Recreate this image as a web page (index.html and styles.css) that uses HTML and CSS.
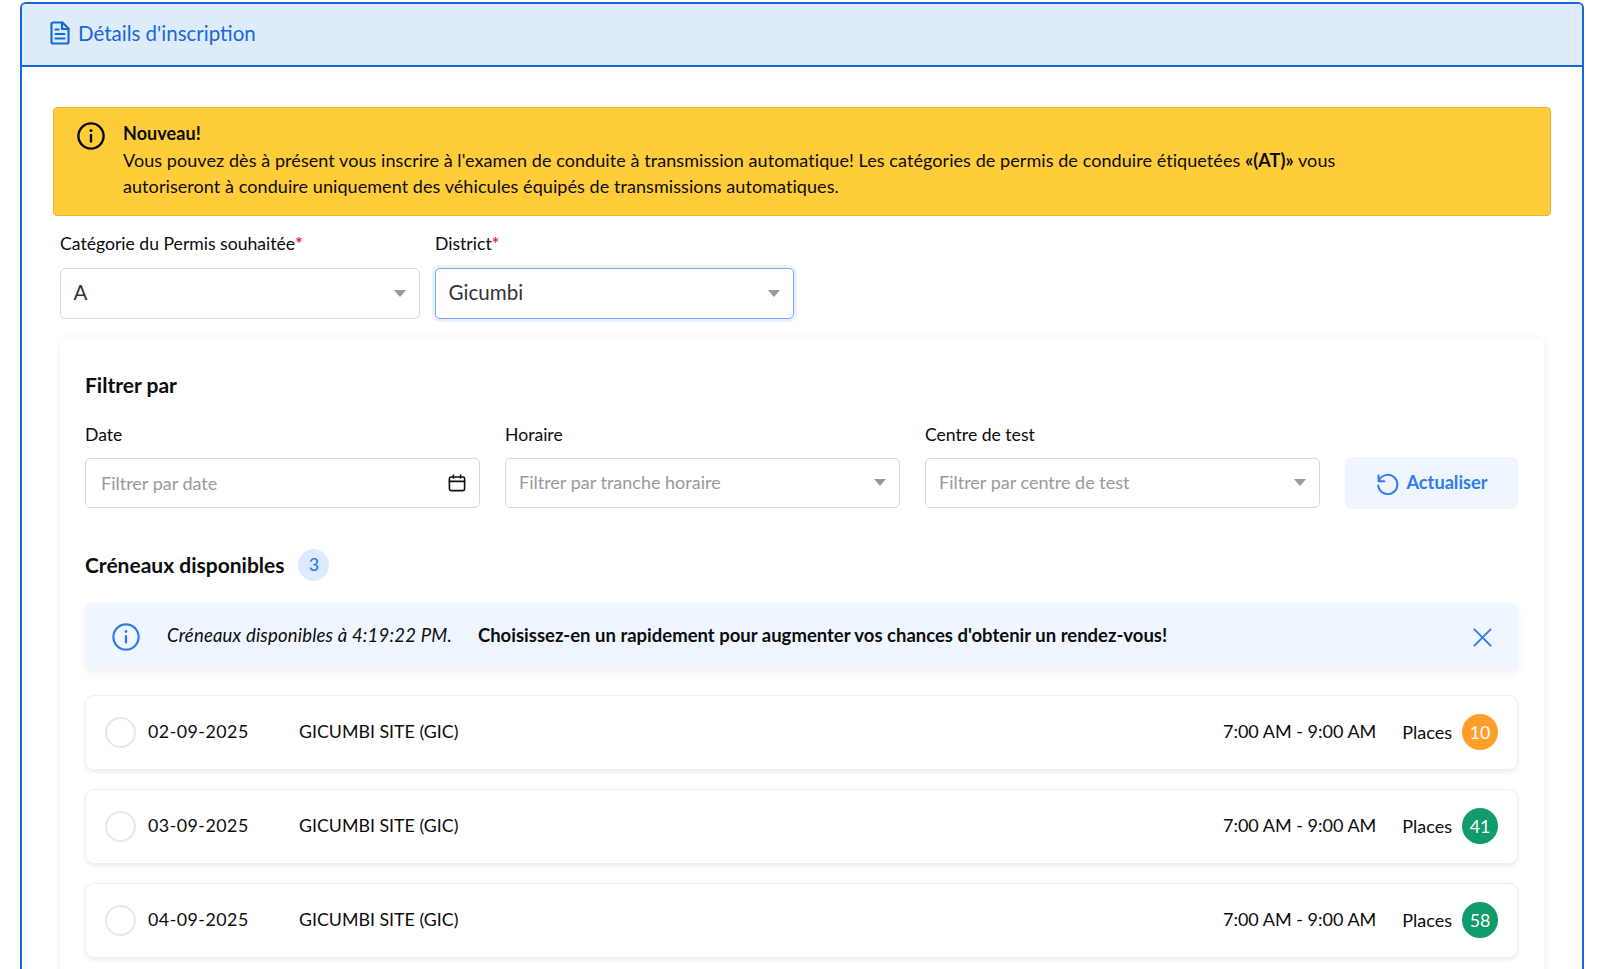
FILE: index.html
```html
<!DOCTYPE html>
<html lang="fr">
<head>
<meta charset="utf-8">
<title>Détails d'inscription</title>
<link rel="stylesheet" href="styles.css">
</head>
<body>
<section class="panel">
  <header class="panel-head">
    <svg class="doc-icon" viewBox="0 0 20 24" fill="none" stroke="currentColor" stroke-width="2.2" stroke-linejoin="round" stroke-linecap="round"><path d="M3 1.500h9.500l6 6V21a1.500 1.500 0 0 1-1.500 1.500H3A1.500 1.500 0 0 1 1.500 21V3A1.500 1.500 0 0 1 3 1.500z"/><path d="M12 1.500V8h6.500"/><path d="M5.500 8.500h3M5.500 13h9M5.500 17.500h9"/></svg>
    <h1 class="panel-title">Détails d'inscription</h1>
  </header>
  <div class="panel-body">
    <div class="notice">
      <svg class="notice-icon" viewBox="0 0 28 28" fill="none" stroke="currentColor" stroke-width="2.4" stroke-linecap="round"><circle cx="14" cy="14" r="12.600"/><path d="M14 13v6.500"/><path d="M14 8.400v.2" stroke-width="3"/></svg>
      <div class="notice-text">
        <strong>Nouveau!</strong><br>
        Vous pouvez dès à présent vous inscrire à l'examen de conduite à transmission automatique! Les catégories de permis de conduire étiquetées <strong>«(AT)»</strong> vous<br>
        autoriseront à conduire uniquement des véhicules équipés de transmissions automatiques.
      </div>
    </div>

    <div class="top-fields">
      <div class="field">
        <label class="label">Catégorie du Permis souhaitée<span class="req">*</span></label>
        <div class="select big"><span>A</span><i class="caret"></i></div>
      </div>
      <div class="field">
        <label class="label">District<span class="req">*</span></label>
        <div class="select big focus"><span>Gicumbi</span><i class="caret"></i></div>
      </div>
    </div>

    <div class="card">
      <h2 class="card-title">Filtrer par</h2>
      <div class="filters">
        <div class="field">
          <label class="label">Date</label>
          <div class="select date"><span class="ph">Filtrer par date</span>
            <svg class="cal" viewBox="0 0 18 18" fill="none" stroke="currentColor" stroke-width="1.600" stroke-linecap="round"><rect x="1.400" y="3" width="15.200" height="13.600" rx="1.600"/><path d="M1.400 7.400h15.200M5.400 1v3M12.600 1v3"/></svg>
          </div>
        </div>
        <div class="field">
          <label class="label">Horaire</label>
          <div class="select"><span class="ph">Filtrer par tranche horaire</span><i class="caret"></i></div>
        </div>
        <div class="field">
          <label class="label">Centre de test</label>
          <div class="select"><span class="ph">Filtrer par centre de test</span><i class="caret"></i></div>
        </div>
        <button class="refresh" type="button">
          <svg class="refresh-icon" viewBox="0 0 24 24" fill="none" stroke="currentColor" stroke-width="2" stroke-linecap="round" stroke-linejoin="round"><path d="M3.600 4.600v5.600h5.600"/><path d="M3.800 10a9.600 9.600 0 1 1-.6 4.400"/></svg>
          Actualiser
        </button>
      </div>

      <div class="slots-head">
        <h2 class="slots-title">Créneaux disponibles</h2>
        <span class="count">3</span>
      </div>

      <div class="banner">
        <svg class="banner-icon" viewBox="0 0 28 28" fill="none" stroke="currentColor" stroke-width="2.200" stroke-linecap="round"><circle cx="14" cy="14" r="12.600"/><path d="M14 13v6.500"/><path d="M14 8.400v.2" stroke-width="2.600"/></svg>
        <em class="banner-time">Créneaux disponibles à 4:19:22 PM.</em>
        <strong class="banner-msg">Choisissez-en un rapidement pour augmenter vos chances d'obtenir un rendez-vous!</strong>
        <svg class="banner-close" viewBox="0 0 20 20" fill="none" stroke="currentColor" stroke-width="2" stroke-linecap="round"><path d="M1.500 1.500l17 17M18.500 1.500l-17 17"/></svg>
      </div>

      <ul class="slots">
        <li class="slot"><span class="radio"></span><span class="slot-date">02-09-2025</span><span class="slot-site">GICUMBI SITE (GIC)</span><span class="slot-time">7:00 AM - 9:00 AM</span><span class="slot-label">Places</span><span class="seats low">10</span></li>
        <li class="slot"><span class="radio"></span><span class="slot-date">03-09-2025</span><span class="slot-site">GICUMBI SITE (GIC)</span><span class="slot-time">7:00 AM - 9:00 AM</span><span class="slot-label">Places</span><span class="seats">41</span></li>
        <li class="slot"><span class="radio"></span><span class="slot-date">04-09-2025</span><span class="slot-site">GICUMBI SITE (GIC)</span><span class="slot-time">7:00 AM - 9:00 AM</span><span class="slot-label">Places</span><span class="seats">58</span></li>
      </ul>
    </div>
  </div>
</section>
</body>
</html>
```
FILE: styles.css
```css
* { box-sizing: border-box; }
html, body { height: 100%; overflow: hidden; }
body {
  margin: 0;
  background: #fff;
  color: #0c0c0c;
  font-family: "Lato", "Open Sans", sans-serif;
  font-size: 17.600px;
  padding: 2px 16px 0 20px;
}
.panel {
  border: 2px solid #1668dc;
  border-bottom: 0;
  border-radius: 6px 6px 0 0;
  height: 967px;
  overflow: hidden;
}
.panel-head {
  height: 63px;
  background: #deecf9;
  border-bottom: 2px solid #1668dc;
  display: flex;
  align-items: center;
  gap: 8px;
  padding: 0 0 4px 28px;
  color: #1668dc;
}
.doc-icon { width: 20px; height: 24px; flex: none; }
.panel-title { margin: 0; font-size: 20.500px; font-weight: 400; }
.panel-body { padding: 40px 30px 0 31px; }
.notice {
  height: 109px;
  margin-right: 1px;
  background: #ffcc3a;
  border: 1px solid #eeb13a;
  border-radius: 4px;
  display: flex;
  padding: 14px 0 0 23px;
  gap: 18px;
}
.notice-icon { width: 28px; height: 28px; flex: none; }
.notice-text { font-size: 18px; letter-spacing: .07px; line-height: 26.700px; margin-top: -2px; }
.top-fields {
  display: grid;
  grid-template-columns: 360px 359px;
  gap: 15px;
  padding: 17px 0 0 7px;
}
.label { display: block; font-size: 17.600px; line-height: 22px; margin-bottom: 13px; }
.req { color: #f5164a; font-weight: 700; }
.select {
  height: 50px;
  border: 1px solid #d9d9d9;
  border-radius: 5px;
  background: #fff;
  display: flex;
  align-items: center;
  justify-content: space-between;
  padding: 0 13px 1.500px 13px;
}
.select.big { height: 50.500px; font-size: 20.600px; color: #333; padding: 0 13px 2px 12.500px; }
.select.focus {
  border: 1.500px solid #74aaf9;
  box-shadow: 0 0 0 3px #e9f2fe;
}
.caret {
  width: 0; height: 0;
  border-left: 6.500px solid transparent;
  border-right: 6.500px solid transparent;
  border-top: 7px solid #999;
  margin-top: 2px;
}
.ph { color: #9a9a9a; font-size: 18px; }
.select.date { padding: 0 13px 0 15px; }
.cal { width: 18px; height: 18px; color: #111; margin-top: 1.500px; }
.card {
  margin: 20.500px 8px 0 7px;
  border-radius: 8px;
  background: #fff;
  box-shadow: 0 0 8px rgba(0, 0, 0, .07);
  padding: 33.500px 26px 0 25px;
  height: 700px;
}
.card-title { margin: 0; font-size: 21px; font-weight: 700; line-height: 24px; color: #0c0c0c; }
.filters {
  display: grid;
  grid-template-columns: 395px 395px 395px 173px;
  column-gap: 25px;
  align-items: end;
  margin-top: 27px;
}
.filters .label { margin-bottom: 12px; }
.refresh {
  height: 52px;
  border: 0;
  border-radius: 6px;
  background: #eff6ff;
  color: #2f7bf0;
  font: 700 18.200px "Lato", sans-serif;
  display: flex;
  align-items: center;
  justify-content: center;
  gap: 7px;
  padding: 0 0 1.500px;
  margin-bottom: -1px;
}
.refresh-icon { width: 24px; height: 24px; flex: none; margin-top: 2px; }
.slots-head { display: flex; align-items: center; gap: 14px; margin-top: 41px; }
.slots-title { margin: 0; font-size: 21px; font-weight: 700; line-height: 32px; padding-bottom: 1px; }
.count {
  width: 31px; height: 32px;
  border-radius: 50%;
  background: #dbeafe;
  color: #2f7bf0;
  font-size: 18px;
  font-weight: 500;
  padding-bottom: 2px;
  display: flex;
  align-items: center;
  justify-content: center;
}
.banner {
  height: 67.500px;
  margin-top: 21px;
  background: #eff6ff;
  border-radius: 6px;
  box-shadow: 0 4px 8px rgba(0, 0, 0, .05);
  display: flex;
  align-items: center;
  padding: 0 26px 3px 27px;
  font-size: 18.500px;
}
.banner-icon { width: 28px; height: 28px; color: #2f7bf0; flex: none; margin: 5px 27px 0 0; }
.banner-time { margin-right: 26px; letter-spacing: .2px; }
.banner-msg { flex: 1; font-weight: 700; }
.banner-close { width: 19px; height: 19px; color: #2f7bf0; flex: none; margin-top: 5px; }
.slots { list-style: none; margin: 25px 0 0; padding: 0; display: flex; flex-direction: column; gap: 19.500px; }
.slot {
  height: 74.500px;
  border-radius: 9px;
  border: 1px solid #efefef;
  background: #fff;
  box-shadow: 0 2px 5px rgba(0, 0, 0, .08);
  display: flex;
  align-items: center;
  padding: 0 19px 0 19px;
  font-size: 17.800px;
}
.radio { width: 31px; height: 31px; border-radius: 50%; border: 2px solid #e6e6ee; flex: none; margin-right: 12px; }
.slot-date { width: 151px; flex: none; letter-spacing: .5px; padding-bottom: 2px; }
.slot-site { flex: 1; padding-bottom: 2px; }
.slot-time { margin-right: 26px; font-size: 18px; padding-bottom: 2px; }
.slot-label { margin-right: 10px; font-size: 18px; }
.seats {
  width: 36px; height: 36px;
  border-radius: 50%;
  background: #0f9b6c;
  color: #fff;
  display: flex;
  align-items: center;
  justify-content: center;
  flex: none;
}
.seats.low { background: #ff9f2a; }
```
